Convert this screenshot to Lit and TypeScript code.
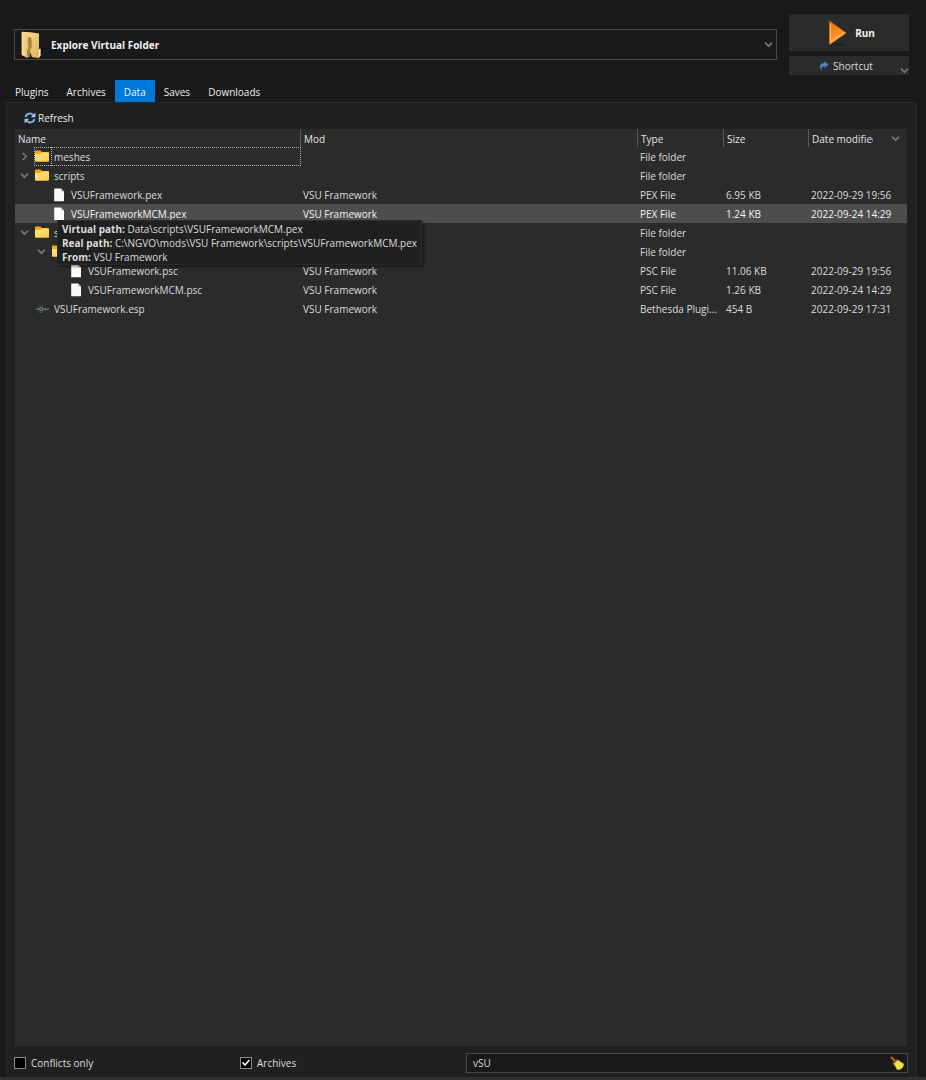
import { LitElement, html, css, nothing } from "lit";
import { customElement, state } from "lit/decorators.js";

type Kind = "folder" | "file" | "plugin";

interface Entry {
  name: string;
  kind: Kind;
  depth: number;
  open?: boolean;
  mod?: string;
  type: string;
  size?: string;
  date?: string;
}

const ENTRIES: Entry[] = [
  { name: "meshes", kind: "folder", depth: 0, open: false, type: "File folder" },
  { name: "scripts", kind: "folder", depth: 0, open: true, type: "File folder" },
  { name: "VSUFramework.pex", kind: "file", depth: 1, mod: "VSU Framework", type: "PEX File", size: "6.95 KB", date: "2022-09-29 19:56" },
  { name: "VSUFrameworkMCM.pex", kind: "file", depth: 1, mod: "VSU Framework", type: "PEX File", size: "1.24 KB", date: "2022-09-24 14:29" },
  { name: "s", kind: "folder", depth: 0, open: true, type: "File folder" },
  { name: "", kind: "folder", depth: 1, open: true, type: "File folder" },
  { name: "VSUFramework.psc", kind: "file", depth: 2, mod: "VSU Framework", type: "PSC File", size: "11.06 KB", date: "2022-09-29 19:56" },
  { name: "VSUFrameworkMCM.psc", kind: "file", depth: 2, mod: "VSU Framework", type: "PSC File", size: "1.26 KB", date: "2022-09-24 14:29" },
  { name: "VSUFramework.esp", kind: "plugin", depth: 0, mod: "VSU Framework", type: "Bethesda Plugi...", size: "454 B", date: "2022-09-29 17:31" },
];

const TABS = ["Plugins", "Archives", "Data", "Saves", "Downloads"];

const chevron = html`<svg class="chevron" viewBox="0 0 9 9" width="9" height="9" aria-hidden="true">
  <path d="M1 2.6 4.5 6.2 8 2.6" fill="none" stroke="#747474" stroke-width="1.7" />
</svg>`;

const folderIcon = html`<svg viewBox="0 0 15 13" width="15" height="13" aria-hidden="true">
  <defs>
    <linearGradient id="ff" x1="0" y1="0" x2="1" y2="1">
      <stop offset="0" stop-color="#ffe596" />
      <stop offset="1" stop-color="#fdc840" />
    </linearGradient>
  </defs>
  <path d="M0 1.4Q0 .4 1 .4H5.2L7 2H13Q14 2 14 3V6H0Z" fill="#f5ac0c" />
  <path d="M0 4H5.4L7 2.6H13.2Q14 2.6 14 3.4V10.8Q14 11.8 13 11.8H1Q0 11.8 0 10.8Z" fill="url(#ff)" />
</svg>`;

const fileIcon = html`<svg viewBox="0 0 11 14" width="11" height="14" aria-hidden="true">
  <path d="M.2 .4H7L10 3.4V13.2H.2Z" fill="#fafafa" />
  <path d="M7 .4V3.4H10Z" fill="#bdbdbd" />
</svg>`;

const pluginIcon = html`<svg viewBox="0 0 15 12" width="15" height="12" aria-hidden="true">
  <g fill="none" stroke="#5f6c70" stroke-width="1">
    <path d="M.5 6H5M8 6.3H14" stroke-width="1.4" />
    <path d="M2.5 4.3 4.2 3.2 7.6 3.2M3 8 5 9.6 7.5 9.2" stroke="#4c5a60" />
    <circle cx="6.3" cy="6.2" r="1.6" stroke="#8b989c" />
    <path d="M10.3 4.6V8" stroke="#5d6a6e" />
  </g>
</svg>`;

const openFolder = html`<svg class="big-folder" viewBox="0 0 22 28" width="22" height="28" aria-hidden="true">
  <defs>
    <linearGradient id="bf" x1="0" y1="0" x2="1" y2="0">
      <stop offset="0" stop-color="#fbe2a0" />
      <stop offset="1" stop-color="#e6bc62" />
    </linearGradient>
    <linearGradient id="bg" x1="0" y1="0" x2="1" y2="1">
      <stop offset="0" stop-color="#f8dc93" />
      <stop offset="1" stop-color="#e0b257" />
    </linearGradient>
  </defs>
  <path d="M18 25 22 21V17L19 19Z" fill="#0c0c0c" />
  <path d="M1 .8 10 1.2 18 2.4V17.5L19.2 18.5V25L18 27.2 11 26Z" fill="url(#bg)" />
  <path d="M7.4 5.6 10.6 7.2V17L9 18.6V26L6 26.4Z" fill="#a48340" />
  <path d="M.6 .8 6.6 5.2 7.6 17.6 6.4 19.4V27L.6 24Z" fill="url(#bf)" />
  <path d="M18 19 19.6 17.4V24.6L18 26Z" fill="#f4f1e6" />
</svg>`;

const playIcon = html`<svg viewBox="0 0 20 28" width="20" height="28" aria-hidden="true">
  <defs>
    <linearGradient id="pl" x1="0" y1="0" x2=".6" y2="1">
      <stop offset="0" stop-color="#e8690a" />
      <stop offset=".5" stop-color="#fb8a1e" />
      <stop offset="1" stop-color="#ffb45a" />
    </linearGradient>
  </defs>
  <ellipse cx="9" cy="25.8" rx="9" ry="1.2" fill="#212121" />
  <path d="M1.6 2.4 18 14 1.6 25.4Z" fill="url(#pl)" stroke="#e3700f" stroke-width="1" stroke-linejoin="round" />
  <path d="M2.7 4.5V23.4L16.2 14" fill="none" stroke="#ffc88c" stroke-width=".8" />
</svg>`;

const shortcutIcon = html`<svg viewBox="0 0 10 10" width="10" height="10" aria-hidden="true">
  <path d="M2.4 9.4C-.4 5.6 1.4 2 5.4 2V.2L9.4 3.6 5.4 7.2V5.2C3.4 5.2 2 6.8 2.4 9.4Z" fill="#5a86bd" stroke="#37587f" stroke-width=".5" />
</svg>`;

const refreshIcon = html`<svg viewBox="0 0 12 12" width="12" height="12" aria-hidden="true">
  <g fill="none" stroke="#7fa8d8" stroke-width="2">
    <path d="M1.6 5.2A4.4 4.4 0 0 1 9.2 3" />
    <path d="M10.4 6.8A4.4 4.4 0 0 1 2.8 9" />
  </g>
  <path d="M11.4 .6V5.2H6.8Z" fill="#a9c8ec" />
  <path d="M.6 11.4V6.8H5.2Z" fill="#a9c8ec" />
</svg>`;

const broomIcon = html`<svg viewBox="0 0 15 15" width="15" height="15" aria-hidden="true">
  <path d="M1.6 1.6 5 5.2" stroke="#b5651d" stroke-width="2.2" stroke-linecap="round" />
  <path d="M3.2 7.4 7.2 3.6 14 8Q13.8 11.4 10.6 13.4L7 13.8Q5.6 10 3.2 7.4Z" fill="#ecd93a" stroke="#a08a14" stroke-width=".6" />
  <path d="M3.6 7.2 7 3.9" stroke="#b04a18" stroke-width="1.3" />
  <path d="M6.2 7.6 8.8 12.6M8 6.2 12 11" stroke="#fbf49a" stroke-width="1" />
</svg>`;

const ICONS: Record<Kind, unknown> = { folder: folderIcon, file: fileIcon, plugin: pluginIcon };

@customElement("app-root")
export class AppRoot extends LitElement {
  @state() private tab = "Data";
  @state() private selected = 3;

  static styles = css`
    :host {
      display: flex;
      flex-direction: column;
      min-height: 100vh;
      box-sizing: border-box;
      background: #191919;
      color: #dcdcdc;
      font: 10px/14px "Open Sans", "Noto Sans", sans-serif;
      border-bottom: 3px solid #332f30;
    }
    * { box-sizing: border-box; }
    button, input, select { font: inherit; color: inherit; margin: 0; padding: 0; border: 0; border-radius: 0; background: none; }
    svg { display: block; flex: none; }

    .top { display: flex; align-items: center; gap: 12px; padding: 14px 17px 0 14px; }
    .launcher {
      flex: 1;
      display: grid;
      align-items: center;
      height: 31px;
      border: 1px solid #484848;
      background: #191919;
    }
    .launcher > * { grid-area: 1 / 1; }
    .launcher select {
      appearance: none;
      width: 100%;
      height: 29px;
      padding-left: 36px;
      font-weight: 700;
      color: #f2f2f2;
    }
    .launcher .big-folder { margin-left: 6px; pointer-events: none; }
    .launcher .chevron { justify-self: end; margin-right: 3px; pointer-events: none; }
    .actions { width: 120px; display: flex; flex-direction: column; gap: 5px; }
    .run, .shortcut { display: flex; align-items: center; justify-content: center; background: #2b2b2b; }
    .run { height: 37px; gap: 7px; font-weight: 700; color: #f2f2f2; padding-left: 5px; }
    .shortcut { position: relative; height: 19px; gap: 4px; padding-right: 6px; }
    .shortcut .chevron { position: absolute; right: 0; bottom: 0; }

    .tabs { display: flex; margin: 5px 0 0 6px; }
    .tabs button { height: 22px; padding: 2px 9px 0; color: #ececec; }
    .tabs .on { background: #0078d7; color: #f4f4f4; }

    .page {
      flex: 1;
      display: flex;
      flex-direction: column;
      margin: 0 9px 0 6px;
      padding: 7px 9px 4px 8px;
      background: #202020;
      border: 1px solid #282828;
      border-bottom: 0;
    }
    .refresh { align-self: flex-start; display: flex; align-items: center; gap: 2px; height: 16px; margin: 0 0 3px 9px; color: #ececec; }

    .tree { position: relative; flex: 1; background: #2b2b2b; }
    table { width: 100%; table-layout: fixed; border-collapse: separate; border-spacing: 0; }
    .c-name { width: 286px; }
    .c-type { width: 86px; }
    .c-size { width: 85px; }
    .c-date { width: 98px; }
    th, td { height: 19px; padding: 0 2px; text-align: left; font-weight: 400; white-space: nowrap; }
    th { height: 18px; padding: 1px 2px 0 3px; border-right: 1px solid #5a5a5a; color: #e6e6e6; }
    th:last-child { border-right: 0; }
    .sort { display: flex; align-items: center; justify-content: space-between; width: 100%; padding-right: 5px; }
    .sort span { width: 61px; overflow: hidden; text-align: left; }
    .sel { background: #4d4d4d; color: #f4f4f4; }
    .cell { display: flex; align-items: center; height: 19px; }
    td.first { padding: 0; }
    .d0 { padding-left: 4px; }
    .d1 { padding-left: 21px; }
    .d2 { padding-left: 38px; }
    .toggle { width: 15px; height: 19px; display: grid; place-items: center; padding-right: 5px; }
    .shut .chevron { transform: rotate(-90deg); }
    .focus { flex: 1; display: flex; align-items: center; height: 19px; }
    .ico { display: grid; place-items: center; width: 17px; height: 100%; margin-right: 3px; }
    .ring { outline: 1px dotted #b4b4b4; outline-offset: -1px; }
    .ring .ico { border-right: 1px dotted #b4b4b4; width: 18px; margin-right: 2px; }

    .tip {
      position: absolute;
      left: 42px;
      top: 91px;
      padding: 1px 4px 0;
      background: #202020;
      border: 1px solid #2a2a2a;
      box-shadow: 2px 2px 2px rgba(0, 0, 0, 0.4);
      color: #dcdcdc;
      line-height: 14px;
      white-space: nowrap;
    }

    .filters { display: grid; grid-template-columns: 1fr 1fr 2fr; gap: 5px; align-items: center; margin: 7px -1px 0 -1px; }
    .filters label { display: flex; align-items: center; gap: 5px; }
    .filters input[type="checkbox"] {
      appearance: none;
      display: grid;
      place-items: center;
      width: 12px;
      height: 12px;
      border: 1px solid #8a8a8a;
      background: #000;
    }
    .filters input[type="checkbox"]:checked::before {
      content: "";
      width: 8px;
      height: 8px;
      background: #f4f4f4;
      clip-path: polygon(0 50%, 15% 35%, 38% 58%, 85% 5%, 100% 20%, 38% 92%);
    }
    .search { display: flex; align-items: center; height: 20px; padding-right: 2px; border: 1px solid #484848; background: #191919; }
    .search input { flex: 1; min-width: 0; height: 18px; padding-left: 6px; outline: none; }
  `;

  private row(e: Entry, i: number) {
    return html`<tr class=${i === this.selected ? "sel" : ""} @click=${() => (this.selected = i)}>
      <td class="first">
        <div class="cell d${e.depth}">
          ${e.kind === "folder"
            ? html`<button class="toggle ${e.open ? "" : "shut"}" aria-label="Toggle folder">${chevron}</button>`
            : html`<span class="toggle"></span>`}
          <span class="focus ${i === 0 ? "ring" : ""}"><span class="ico">${ICONS[e.kind]}</span>${e.name}</span>
        </div>
      </td>
      <td>${e.mod ?? nothing}</td>
      <td>${e.type}</td>
      <td>${e.size ?? nothing}</td>
      <td>${e.date ?? nothing}</td>
    </tr>`;
  }

  render() {
    return html`
      <div class="top">
        <div class="launcher">
          <select aria-label="Executable"><option>Explore Virtual Folder</option></select>
          ${openFolder}${chevron}
        </div>
        <div class="actions">
          <button class="run">${playIcon}Run</button>
          <button class="shortcut">${shortcutIcon}Shortcut${chevron}</button>
        </div>
      </div>
      <nav class="tabs">
        ${TABS.map((t) => html`<button class=${t === this.tab ? "on" : ""} @click=${() => (this.tab = t)}>${t}</button>`)}
      </nav>
      <main class="page">
        <button class="refresh">${refreshIcon}Refresh</button>
        <div class="tree">
          <table>
            <colgroup><col class="c-name" /><col /><col class="c-type" /><col class="c-size" /><col class="c-date" /></colgroup>
            <thead>
              <tr><th>Name</th><th>Mod</th><th>Type</th><th>Size</th>
                <th><button class="sort"><span>Date modified</span>${chevron}</button></th></tr>
            </thead>
            <tbody>${ENTRIES.map((e, i) => this.row(e, i))}</tbody>
          </table>
          <div class="tip" role="tooltip">
            <b>Virtual path:</b> Data\\scripts\\VSUFrameworkMCM.pex<br />
            <b>Real path:</b> C:\\NGVO\\mods\\VSU Framework\\scripts\\VSUFrameworkMCM.pex<br />
            <b>From:</b> VSU Framework
          </div>
        </div>
        <div class="filters">
          <label><input type="checkbox" />Conflicts only</label>
          <label><input type="checkbox" checked />Archives</label>
          <div class="search"><input type="text" aria-label="Filter" .value=${"vSU"} /><button aria-label="Clear filter">${broomIcon}</button></div>
        </div>
      </main>
    `;
  }
}
